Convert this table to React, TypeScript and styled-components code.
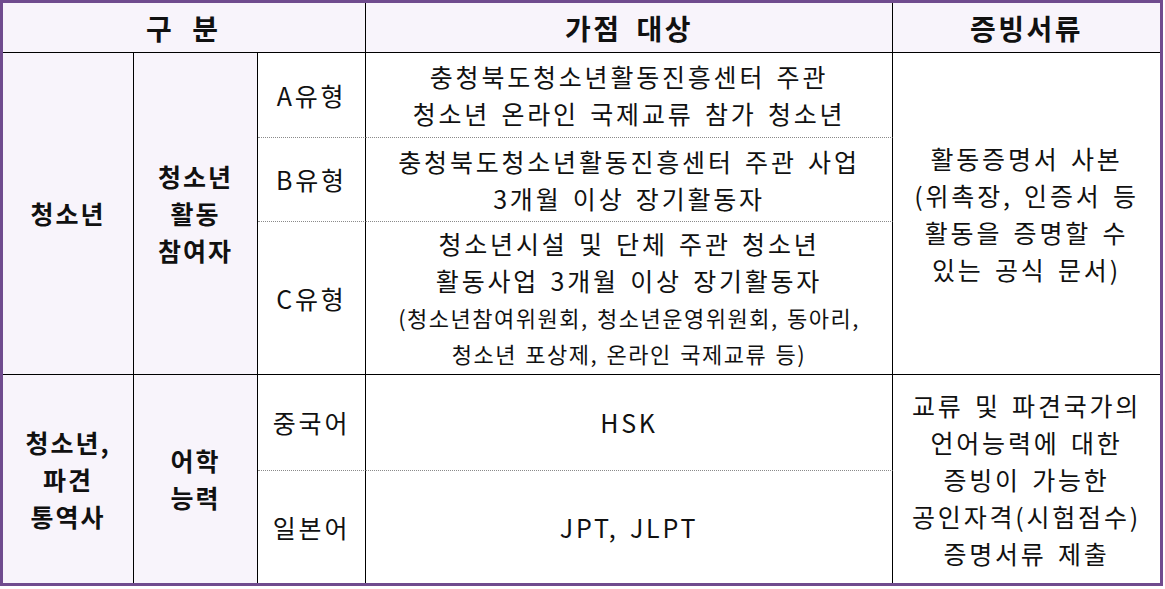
import React from "react";
import styled, { createGlobalStyle } from "styled-components";

const Global = createGlobalStyle`
  html, body { margin: 0; padding: 0; background: #ffffff; }
  body { font-family: "Noto Sans CJK KR", "Noto Sans", sans-serif; color: #111; }
`;

const Board = styled.div`
  box-sizing: border-box;
  width: 1163px;
  border: 3px solid #704b8e;
  display: grid;
  grid-template-columns: 131px 124px 108px 527px 267px;
  grid-template-rows: 50px 85px 84px 153px 96px 112px;
`;

type CellProps = {
  $col: string;
  $row: string;
  $shade?: boolean;
  $noRight?: boolean;
  $noBottom?: boolean;
  $dotted?: boolean;
};

const Cell = styled.div<CellProps>`
  box-sizing: border-box;
  grid-column: ${(p) => p.$col};
  grid-row: ${(p) => p.$row};
  background: ${(p) => (p.$shade ? "#f8f4fb" : "#ffffff")};
  border-right: ${(p) => (p.$noRight ? "none" : "1px solid #000")};
  border-bottom: ${(p) =>
    p.$noBottom ? "none" : p.$dotted ? "1px dotted #8a8a8a" : "1px solid #000"};
  display: flex;
  flex-direction: column;
  align-items: center;
  justify-content: center;
  text-align: center;
`;

const HeadText = styled.span<{ $spacing?: string }>`
  font-size: 28px;
  font-weight: 700;
  letter-spacing: ${(p) => p.$spacing ?? "2.5px"};
  word-spacing: 6px;
  line-height: 32px;
`;

const LabelText = styled.span`
  font-size: 25px;
  font-weight: 700;
  letter-spacing: 2px;
  line-height: 37px;
`;

const BodyText = styled.span`
  font-size: 25px;
  font-weight: 400;
  letter-spacing: 2.8px;
  word-spacing: 3px;
  line-height: 37px;
  white-space: nowrap;
`;

const SmallText = styled.span`
  font-size: 22px;
  font-weight: 400;
  letter-spacing: 1.5px;
  word-spacing: 2px;
  line-height: 36px;
  white-space: nowrap;
`;

const Lines = ({ items, small }: { items: string[]; small?: number[] }) => (
  <>
    {items.map((t, i) =>
      small && small.includes(i) ? (
        <SmallText key={i}>{t}</SmallText>
      ) : (
        <BodyText key={i}>{t}</BodyText>
      )
    )}
  </>
);

const Labels = ({ items }: { items: string[] }) => (
  <>
    {items.map((t, i) => (
      <LabelText key={i}>{t}</LabelText>
    ))}
  </>
);

export default function App() {
  return (
    <>
      <Global />
      <Board>
        <Cell $col="1 / 4" $row="1" $shade>
          <HeadText $spacing="4px">구 분</HeadText>
        </Cell>
        <Cell $col="4" $row="1" $shade>
          <HeadText>가점 대상</HeadText>
        </Cell>
        <Cell $col="5" $row="1" $shade $noRight>
          <HeadText>증빙서류</HeadText>
        </Cell>

        <Cell $col="1" $row="2 / 5" $shade>
          <Labels items={["청소년"]} />
        </Cell>
        <Cell $col="2" $row="2 / 5" $shade>
          <Labels items={["청소년", "활동", "참여자"]} />
        </Cell>

        <Cell $col="3" $row="2" $dotted>
          <BodyText>A유형</BodyText>
        </Cell>
        <Cell $col="4" $row="2" $dotted>
          <Lines items={["충청북도청소년활동진흥센터 주관", "청소년 온라인 국제교류 참가 청소년"]} />
        </Cell>
        <Cell $col="3" $row="3" $dotted>
          <BodyText>B유형</BodyText>
        </Cell>
        <Cell $col="4" $row="3" $dotted>
          <Lines items={["충청북도청소년활동진흥센터 주관 사업", "3개월 이상 장기활동자"]} />
        </Cell>
        <Cell $col="3" $row="4">
          <BodyText>C유형</BodyText>
        </Cell>
        <Cell $col="4" $row="4">
          <Lines
            items={[
              "청소년시설 및 단체 주관 청소년",
              "활동사업 3개월 이상 장기활동자",
              "(청소년참여위원회, 청소년운영위원회, 동아리,",
              "청소년 포상제, 온라인 국제교류 등)",
            ]}
            small={[2, 3]}
          />
        </Cell>
        <Cell $col="5" $row="2 / 5" $noRight>
          <Lines
            items={["활동증명서 사본", "(위촉장, 인증서 등", "활동을 증명할 수", "있는 공식 문서)"]}
          />
        </Cell>

        <Cell $col="1" $row="5 / 7" $shade $noBottom>
          <Labels items={["청소년,", "파견", "통역사"]} />
        </Cell>
        <Cell $col="2" $row="5 / 7" $shade $noBottom>
          <Labels items={["어학", "능력"]} />
        </Cell>
        <Cell $col="3" $row="5" $dotted>
          <BodyText>중국어</BodyText>
        </Cell>
        <Cell $col="4" $row="5" $dotted>
          <BodyText>HSK</BodyText>
        </Cell>
        <Cell $col="3" $row="6" $noBottom>
          <BodyText>일본어</BodyText>
        </Cell>
        <Cell $col="4" $row="6" $noBottom>
          <BodyText>JPT, JLPT</BodyText>
        </Cell>
        <Cell $col="5" $row="5 / 7" $noRight $noBottom>
          <Lines
            items={[
              "교류 및 파견국가의",
              "언어능력에 대한",
              "증빙이 가능한",
              "공인자격(시험점수)",
              "증명서류 제출",
            ]}
          />
        </Cell>
      </Board>
    </>
  );
}
